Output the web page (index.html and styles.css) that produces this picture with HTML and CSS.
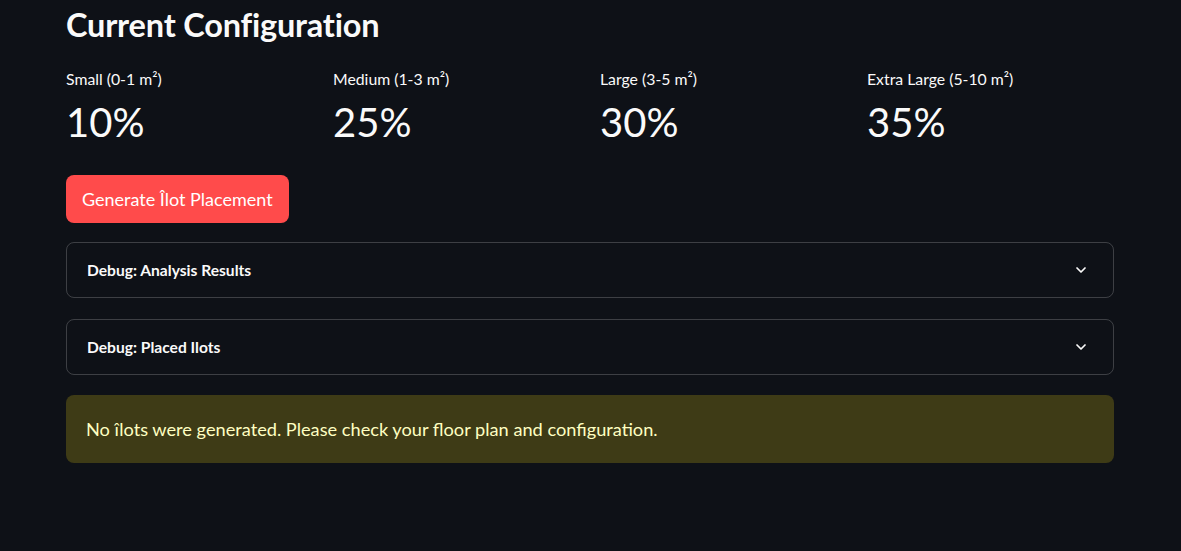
FILE: index.html
```html
<!DOCTYPE html>
<html lang="en">
<head>
<meta charset="utf-8">
<title>Current Configuration</title>
<link rel="stylesheet" href="styles.css">
</head>
<body>
<main class="main">
  <h2 class="title">Current Configuration</h2>
  <div class="metrics">
    <div class="metric">
      <div class="metric-label">Small (0-1 m²)</div>
      <div class="metric-value">10%</div>
    </div>
    <div class="metric">
      <div class="metric-label">Medium (1-3 m²)</div>
      <div class="metric-value">25%</div>
    </div>
    <div class="metric">
      <div class="metric-label">Large (3-5 m²)</div>
      <div class="metric-value">30%</div>
    </div>
    <div class="metric">
      <div class="metric-label">Extra Large (5-10 m²)</div>
      <div class="metric-value">35%</div>
    </div>
  </div>
  <div class="btn-row">
    <button class="btn-primary" type="button">Generate Îlot Placement</button>
  </div>
  <details class="expander">
    <summary class="expander-head">
      <span>Debug: Analysis Results</span>
      <svg class="chev" viewBox="0 0 24 24" width="16" height="16"><path d="M6 9l6 6 6-6" fill="none" stroke="currentColor" stroke-width="2.6" stroke-linecap="round" stroke-linejoin="round"/></svg>
    </summary>
  </details>
  <details class="expander">
    <summary class="expander-head">
      <span>Debug: Placed Ilots</span>
      <svg class="chev" viewBox="0 0 24 24" width="16" height="16"><path d="M6 9l6 6 6-6" fill="none" stroke="currentColor" stroke-width="2.6" stroke-linecap="round" stroke-linejoin="round"/></svg>
    </summary>
  </details>
  <div class="alert-warning">No îlots were generated. Please check your floor plan and configuration.</div>
</main>
</body>
</html>
```
FILE: styles.css
```css
html, body {
  margin: 0;
  padding: 0;
  background: #0e1117;
  color: #fafafa;
  font-family: "Lato", "Source Sans Pro", "Liberation Sans", sans-serif;
}
.main {
  width: 1048px;
  margin: 0 0 0 66px;
  padding-top: 3px;
}
.title {
  margin: 0;
  font-size: 32.5px;
  font-weight: 700;
  line-height: 44px;
  letter-spacing: -0.2px;
}
.metrics {
  display: grid;
  grid-template-columns: repeat(4, 1fr);
  column-gap: 20px;
  margin-top: 22px;
}
.metric-label {
  font-size: 15.8px;
  line-height: 20px;
}
.metric-value {
  font-size: 40px;
  line-height: 48px;
  margin-top: 9px;
}
.btn-row {
  margin-top: 29px;
}
.btn-primary {
  background: #ff4b4b;
  color: #fff;
  border: none;
  border-radius: 8px;
  height: 48px;
  padding: 0 16px;
  font-family: inherit;
  font-size: 18px;
  cursor: pointer;
}
.expander {
  margin-top: 19px;
  border: 1px solid rgba(250, 250, 250, 0.2);
  border-radius: 8px;
}
.expander + .expander {
  margin-top: 21px;
}
.expander-head {
  list-style: none;
  display: flex;
  align-items: center;
  justify-content: space-between;
  height: 54px;
  padding: 0 24px 0 20px;
  font-size: 15.6px;
  font-weight: 700;
  cursor: pointer;
}
.expander-head::-webkit-details-marker { display: none; }
.chev { color: #fafafa; }
.alert-warning {
  margin-top: 20px;
  background: #3e3b16;
  color: #ffffc2;
  border-radius: 8px;
  padding: 0 20px;
  height: 68px;
  display: flex;
  align-items: center;
  font-size: 18.2px;
}
```
